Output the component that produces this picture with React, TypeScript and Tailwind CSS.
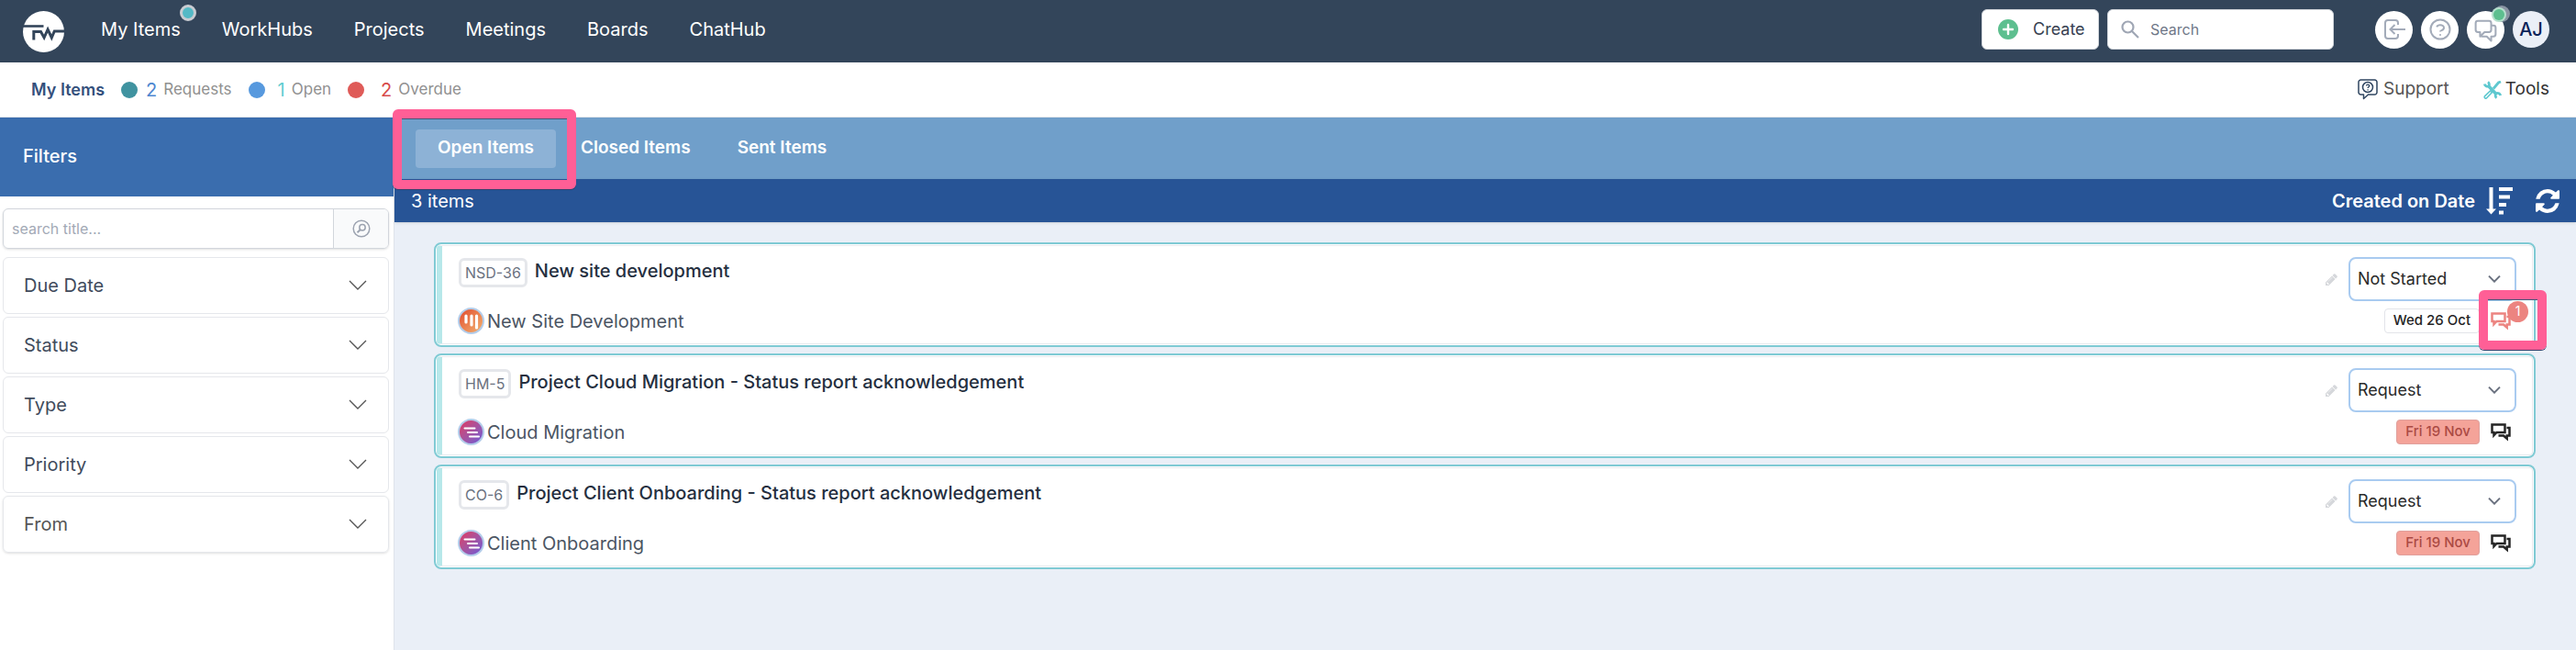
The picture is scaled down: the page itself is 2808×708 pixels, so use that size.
import React, { useState } from "react";

const navLinks = ["WorkHubs", "Projects", "Meetings", "Boards", "ChatHub"];
const tabs = ["Open Items", "Closed Items", "Sent Items"];
const filters = ["Due Date", "Status", "Type", "Priority", "From"];

type Item = {
  code: string;
  title: string;
  project: string;
  kind: "board" | "plan";
  status: string;
  due: string;
  overdue: boolean;
  unread: number;
};

const items: Item[] = [
  {
    code: "NSD-36",
    title: "New site development",
    project: "New Site Development",
    kind: "board",
    status: "Not Started",
    due: "Wed 26 Oct",
    overdue: false,
    unread: 1,
  },
  {
    code: "HM-5",
    title: "Project Cloud Migration - Status report acknowledgement",
    project: "Cloud Migration",
    kind: "plan",
    status: "Request",
    due: "Fri 19 Nov",
    overdue: true,
    unread: 0,
  },
  {
    code: "CO-6",
    title: "Project Client Onboarding - Status report acknowledgement",
    project: "Client Onboarding",
    kind: "plan",
    status: "Request",
    due: "Fri 19 Nov",
    overdue: true,
    unread: 0,
  },
];

const Logo = () => (
  <svg viewBox="0 0 45 45" className="size-[45px] shrink-0">
    <circle cx="22.5" cy="22.5" r="22.5" fill="#fff" />
    <g fill="none" stroke="#33455a" strokeLinejoin="miter">
      <path d="M0 16.500h22.500" strokeWidth="2.600" />
      <path d="M11.800 31.500V22.500h7.700l3.600 6.500 4-9 4.200 9 3-7H45" strokeWidth="3" />
    </g>
  </svg>
);

const ChatOutlineIcon = () => (
  <svg viewBox="0 0 24 24" className="size-[29px]" fill="none" stroke="#a3abb9" strokeWidth="1.7" strokeLinejoin="round">
    <path d="M17 8h2a2 2 0 012 2v6a2 2 0 01-2 2h-2v4l-4-4H9a1.994 1.994 0 01-1.414-.586m0 0L11 14h4a2 2 0 002-2V6a2 2 0 00-2-2H5a2 2 0 00-2 2v6a2 2 0 002 2h2v4l.586-.586z" />
  </svg>
);

const ChatIcon = () => (
  <svg viewBox="0 0 22 20" className="h-5 w-[22px]" fill="none" stroke="currentColor" strokeWidth="2.5">
    <path d="M1.500 1.500h14v8.500h-9l-3 3.200V10h-2z" />
    <path d="M17.500 5h3v8.500h-2.800v3.200L14 13.500H8.500" />
  </svg>
);

const ChevronIcon = ({ className }: { className: string }) => (
  <svg viewBox="0 0 20 12" className={className} fill="none" stroke="currentColor">
    <path d="M1 1l9 9 9-9" />
  </svg>
);

const PencilIcon = () => (
  <svg viewBox="128 128 1536 1536" className="size-[13px]" fill="currentColor">
    <path d="M491 1536l91-91-235-235-91 91v107h128v128h107zm523-928q0-22-22-22-10 0-17 7l-542 542q-7 7-7 17 0 22 22 22 10 0 17-7l542-542q7-7 7-17zm-54-192l416 416-832 832h-416v-416zm683 96q0 53-37 90l-166 166-416-416 166-165q36-38 90-38 53 0 91 38l235 234q37 39 37 91z" />
  </svg>
);

const RefreshIcon = () => (
  <svg viewBox="128 128 1536 1536" className="size-[26px]" fill="currentColor">
    <path d="M1639 1056q0 5-1 7-64 268-268 434.5t-478 166.5q-146 0-282.5-55t-243.5-157l-129 129q-19 19-45 19t-45-19-19-45v-448q0-26 19-45t45-19h448q26 0 45 19t19 45-19 45l-137 137q71 66 161 102t187 36q134 0 250-65t186-179q11-17 53-117 8-23 30-23h192q13 0 22.5 9.5t9.5 22.5zm25-800v448q0 26-19 45t-45 19h-448q-26 0-45-19t-19-45 19-45l138-138q-148-137-349-137-134 0-250 65t-186 179q-11 17-53 117-8 23-30 23h-199q-13 0-22.5-9.5t-9.5-22.5v-7q65-268 270-434.5t480-166.5q146 0 284 55.500t245 156.500l130-129q19-19 45-19t45 19 19 45z" />
  </svg>
);

const SortIcon = () => (
  <svg viewBox="0 0 29 30" className="h-[30px] w-[29px]" fill="currentColor">
    <path d="M3.500 0h4v23.500H11L5.500 29.500 0 23.500h3.500z" />
    <path d="M14 0h15v4H14zM14 8.500h12v4H14zM14 17h8v4h-8zM14 25.500h5v4h-5z" />
  </svg>
);

const SupportIcon = () => (
  <svg viewBox="0 0 22 23" className="h-[23px] w-[22px]" fill="none" stroke="#2f4560" strokeWidth="1.500" strokeLinejoin="round">
    <path d="M3.500 1h15A2.500 2.500 0 0121 3.500v11a2.500 2.500 0 01-2.500 2.500h-7L6.500 21.500V17h-3A2.500 2.500 0 011 14.500v-11A2.500 2.500 0 013.500 1z" />
    <circle cx="11" cy="9" r="5.500" />
    <path d="M9.500 7.600c0-2 3.200-2 3.200 0 0 1.200-1.600 1.200-1.600 2.500M11.100 11.200v1.300" strokeWidth="1.300" />
  </svg>
);

const ToolsIcon = () => (
  <svg viewBox="0 0 20 20" className="size-5" fill="none" stroke="#5ec8cf">
    <path d="M5 5l9.500 10" strokeWidth="3.500" />
    <path d="M1.300 3.500a3.200 3.200 0 004.500 2.300A3.200 3.200 0 005 1.300M18.700 16a3.200 3.200 0 00-4.500-2.300A3.200 3.200 0 0014.500 18.700" strokeWidth="2.800" />
    <path d="M19 1l-2.500 1-5.500 6.500" strokeWidth="2.800" />
    <path d="M7.500 11L1.600 16.700a1.400 1.400 0 002 2L9.300 12.700z" strokeWidth="1.600" />
  </svg>
);

const ProjectIcon = ({ kind }: { kind: Item["kind"] }) => (
  <span
    className={
      kind === "board"
        ? "flex size-[29px] items-center justify-center rounded-full border-2 border-[#b3cdea] bg-linear-to-br from-[#e0492f] to-[#f0b070]"
        : "flex size-[29px] items-center justify-center rounded-full border-2 border-[#b3cdea] bg-linear-to-br from-[#e0305e] to-[#6a56d8]"
    }
  >
    <svg viewBox="0 0 18 18" className="size-[18px]" stroke="#fff" strokeLinecap="round">
      {kind === "board" ? (
        <path d="M3 3v7M9 3v10M14.500 3v13" strokeWidth="3.200" />
      ) : (
        <path d="M1.500 4.500h11M5 9h10M7 13.500h10" strokeWidth="2" />
      )}
    </svg>
  </span>
);

const Highlight = ({ className }: { className: string }) => (
  <span
    className={`pointer-events-none absolute z-10 rounded-md border-[10px] border-[#ff5f96] shadow-[0_1px_0_#33406b,inset_0_1px_0_#40587a] ${className}`}
  />
);

const Header = () => (
  <header className="flex h-[68px] items-center bg-[#33455a] pr-[29px] pl-[25px]">
    <a href="#" aria-label="Home" className="mr-10">
      <Logo />
    </a>
    <nav className="mb-1 flex items-center gap-[45px] text-xl text-white">
      <a href="#" className="relative">
        My Items
        <span className="absolute -top-[13px] -right-[17px] size-[18px] rounded-full border-3 border-[#c9ccd2] bg-[#54b9c6]" />
      </a>
      {navLinks.map((link) => (
        <a href="#" key={link}>
          {link}
        </a>
      ))}
    </nav>
    <div className="mb-1 ml-auto flex items-center">
      <button className="flex h-11 w-32 items-center rounded-md border border-[#d2d6dc] bg-white pl-[17px] text-lg text-[#374151]">
        <svg viewBox="0 0 22 22" className="mr-4 size-[22px]">
          <circle cx="11" cy="11" r="11" fill="#5dbf8f" />
          <path d="M11 6v10M6 11h10" stroke="#fff" strokeWidth="2.400" strokeLinecap="round" />
        </svg>
        Create
      </button>
      <label className="ml-[9px] flex h-11 w-[247px] items-center rounded-md border border-[#d2d6dc] bg-white pl-3.5">
        <svg viewBox="0 0 20 20" className="mr-3 size-5" fill="none" stroke="#9fa6b4" strokeWidth="2.200">
          <circle cx="7.500" cy="7.500" r="6" />
          <path d="M12 12l7 7" />
        </svg>
        <input
          aria-label="Search"
          placeholder="Search"
          className="min-w-0 flex-1 text-base outline-none placeholder:text-[#6f7787]"
        />
      </label>
      <div className="ml-[45px] flex gap-[9px]">
        <button aria-label="Sign out" className="flex size-[41px] items-center justify-center rounded-full bg-white">
          <svg viewBox="0 0 24 22" className="h-[22px] w-6" fill="none" stroke="#a3abb9" strokeWidth="2">
            <path d="M16 6V4a3 3 0 00-3-3H5a3 3 0 00-3 3v14a3 3 0 003 3h8a3 3 0 003-3v-2" />
            <path d="M24 11H8M12.500 6L7.500 11l5 5" />
          </svg>
        </button>
        <button aria-label="Help" className="flex size-[41px] items-center justify-center rounded-full bg-white">
          <svg viewBox="0 0 24 24" className="size-6" fill="none" stroke="#a3abb9" strokeWidth="2">
            <circle cx="12" cy="12" r="10.500" />
            <path d="M8.200 9.300c.6-1.400 2.100-2.100 3.800-2.100 2.200 0 4 1.300 4 3s-1.300 2.400-2.600 2.900c-1 .3-1.400.6-1.400 1.300M12 17.200v1.600" />
          </svg>
        </button>
        <button aria-label="Chat" className="relative flex size-[41px] items-center justify-center rounded-full bg-white">
          <ChatOutlineIcon />
          <span className="absolute -top-1.5 -right-1.5 size-[18px] rounded-full bg-[#8a94a3]" />
          <span className="absolute -top-1 -right-0.5 flex size-4 items-center justify-center rounded-full bg-[#b5dfcd]">
            <span className="size-3 rounded-full bg-[#5dbf8f]" />
          </span>
        </button>
        <button className="flex size-10 items-center justify-center rounded-full bg-[#ebeff7] text-xl font-medium text-[#0c2359]">
          AJ
        </button>
      </div>
    </div>
  </header>
);

const SummaryBar = () => (
  <div className="flex h-15 items-center border-b border-[#e5e7eb] pr-[29px] pl-[34px] text-[17px] text-[#909090]">
    <h1 className="text-lg font-semibold text-[#34507c]">My Items</h1>
    <span className="ml-[18px] size-[18px] rounded-full bg-[#4093a0]" />
    <span className="ml-[9px] text-xl text-[#4e86d0]">2</span>
    <span className="ml-[7px]">Requests</span>
    <span className="ml-[18px] size-[18px] rounded-full bg-[#5799de]" />
    <span className="ml-3.5 text-xl text-[#62cdd0]">1</span>
    <span className="ml-[7px]">Open</span>
    <span className="ml-[18px] size-[18px] rounded-full bg-[#df5b58]" />
    <span className="ml-[18px] text-xl text-[#d84a4a]">2</span>
    <span className="ml-[7px]">Overdue</span>
    <a href="#" className="ml-auto flex items-center gap-1.5 text-[19px] text-[#555]">
      <SupportIcon />
      Support
    </a>
    <a href="#" className="ml-[37px] flex items-center gap-1 text-[19px] text-[#333]">
      <ToolsIcon />
      Tools
    </a>
  </div>
);

const Sidebar = () => (
  <aside className="w-[430px] shrink-0 border-r border-[#dfe3ea] bg-white">
    <h2 className="flex h-[86px] items-center bg-[#3a6dae] pb-0.5 pl-[25px] text-xl font-medium text-white">Filters</h2>
    <div className="mt-[13px] mr-[5px] ml-[3px] flex h-11 overflow-hidden rounded-md border border-[#d2d6dc] shadow-sm">
      <input
        aria-label="Search title"
        placeholder="search title..."
        className="min-w-0 flex-1 px-[9px] text-base outline-none placeholder:text-[#a3aab6]"
      />
      <button aria-label="Search" className="flex w-[60px] items-center justify-center border-l border-[#d2d6dc] bg-[#f9fafb]">
        <svg viewBox="0 0 20 20" className="size-5" fill="none" stroke="#9ca3b0" strokeWidth="1.500">
          <circle cx="10" cy="10" r="8.800" />
          <circle cx="11" cy="8.800" r="3.200" />
          <path d="M8.700 11.200L5.500 14.200" strokeWidth="2" />
        </svg>
      </button>
    </div>
    <div className="mt-[9px] mr-[5px] ml-[3px] flex flex-col gap-[3px]">
      {filters.map((name) => (
        <button
          key={name}
          className="flex h-[62px] items-center justify-between rounded-md border border-[#e5e7eb] pr-[23px] pl-[22px] text-xl text-[#414b5c] last:text-[#555] last:shadow"
        >
          {name}
          <ChevronIcon className="h-3 w-5 stroke-[1.4] text-[#555]" />
        </button>
      ))}
    </div>
  </aside>
);

const ItemCard = ({ item }: { item: Item }) => (
  <li className="flex h-[114px] rounded-lg border-2 border-[#7fcad4] bg-white p-px">
    <div className="flex min-w-0 flex-1 justify-between rounded border border-l-6 border-[#e8eaee] border-l-[#b7e8ea] pr-[17px] pl-[18px]">
      <div className="pt-[13px]">
        <div className="flex items-start">
          <span className="flex h-8 items-center rounded-md border-3 border-[#e5e7eb] px-1 text-base text-[#6b7280]">
            {item.code}
          </span>
          <a href="#" className="ml-2 text-xl font-medium text-[#252f3f]">
            {item.title}
          </a>
        </div>
        <div className="mt-[22px] -ml-px flex items-center gap-[3px] text-xl text-[#4b5563]">
          <ProjectIcon kind={item.kind} />
          {item.project}
        </div>
      </div>
      <div className="flex flex-col items-end pt-3">
        <div className="flex items-center gap-3">
          <button aria-label={`Edit ${item.code}`} className="text-[#d5d7db]">
            <PencilIcon />
          </button>
          <div className="relative">
            <select
              aria-label={`Status of ${item.code}`}
              defaultValue={item.status}
              className="h-12 w-[183px] appearance-none rounded-lg border-2 border-[#a9cbf0] bg-white pl-2 text-lg text-[#2a2a2a]"
            >
              <option>Not Started</option>
              <option>Request</option>
            </select>
            <ChevronIcon className="pointer-events-none absolute top-5 right-[17px] h-2 w-3.5 stroke-3 text-[#6b7280]" />
          </div>
        </div>
        <div className="mt-2 mr-[6px] flex items-center gap-3">
          <span
            className={
              item.overdue
                ? "flex h-[27px] items-center rounded border border-[#e0a09c] bg-[#f4a399] px-[9px] text-[15px] font-medium text-[#ab4a44]"
                : "flex h-[27px] items-center rounded border border-[#e2e4e9] px-[9px] text-[15px] font-medium text-[#252525]"
            }
          >
            {item.due}
          </span>
          <button
            aria-label="Comments"
            className={item.unread > 0 ? "relative text-[#ec8480]" : "relative text-[#252525]"}
          >
            <ChatIcon />
            {item.unread > 0 && (
              <>
                <span className="absolute -top-3 left-[18px] flex size-[23px] items-center justify-center rounded-full bg-[#ec8480] text-sm text-white">
                  {item.unread}
                </span>
                <Highlight className="-top-6 -left-[13px] h-[65px] w-[74px]" />
              </>
            )}
          </button>
        </div>
      </div>
    </div>
  </li>
);

const App = () => {
  const [active, setActive] = useState("Open Items");

  return (
    <div className="flex min-h-screen flex-col bg-white font-['Inter',sans-serif]">
      <Header />
      <SummaryBar />
      <div className="flex flex-1">
        <Sidebar />
        <main className="min-w-0 flex-1 bg-[#eaeff7]">
          <div className="flex h-[67px] items-center gap-[3px] bg-[#709fca] pl-[23px]">
            {tabs.map((tab) => (
              <div key={tab} className="relative">
                <button
                  onClick={() => setActive(tab)}
                  className={
                    active === tab
                      ? "h-[42px] rounded bg-[#8db2d6] px-6 text-[19px] font-semibold text-white"
                      : "h-[42px] px-6 text-[19px] font-semibold text-white"
                  }
                >
                  {tab}
                </button>
                {tab === "Open Items" && <Highlight className="-top-[22px] -right-[22px] -bottom-[23px] -left-[25px]" />}
              </div>
            ))}
          </div>
          <div className="flex h-[47px] items-center bg-[#275496] px-[18px] text-white shadow">
            <span className="text-xl">3 items</span>
            <span className="ml-auto text-xl font-semibold">Created on Date</span>
            <button aria-label="Sort order" className="ml-3">
              <SortIcon />
            </button>
            <button aria-label="Refresh" className="ml-[25px]">
              <RefreshIcon />
            </button>
          </div>
          <ul className="mt-[22px] mr-11 ml-[43px] flex flex-col gap-[7px]">
            {items.map((item) => (
              <ItemCard key={item.code} item={item} />
            ))}
          </ul>
        </main>
      </div>
    </div>
  );
};

export default App;
